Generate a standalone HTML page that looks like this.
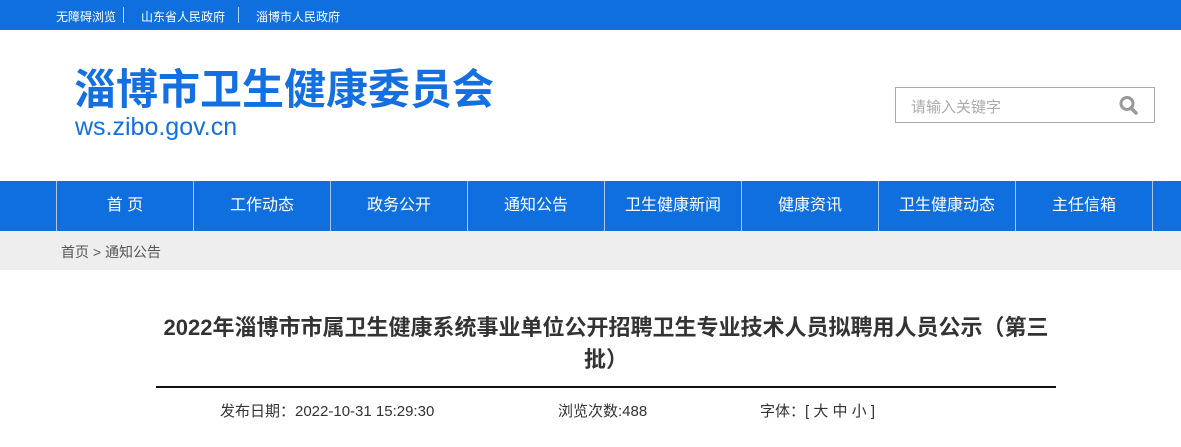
<!DOCTYPE html>
<html><head><meta charset="utf-8"><style>
*{margin:0;padding:0;box-sizing:border-box}
body{width:1181px;height:447px;overflow:hidden;background:#fff;font-family:"Liberation Sans","Noto Sans CJK SC",sans-serif;position:relative}
.top{position:absolute;left:0;top:0;width:1181px;height:30px;background:#0f6fde;color:#fff;font-size:12px}
.top span{position:absolute;top:8px}
.top i{position:absolute;top:7px;width:1px;height:16px;background:#bcd6f5}
.logo{position:absolute;left:74px;top:66px;font-size:42px;font-weight:bold;color:#1470e0;line-height:48px;white-space:nowrap}
.url{position:absolute;left:75px;top:113px;font-size:25px;color:#1470e0}
.search{position:absolute;left:895px;top:87px;width:260px;height:36px;border:1px solid #aaa;}
.search span{position:absolute;left:15px;top:8px;font-size:15px;color:#aaa}
.nav{position:absolute;left:0;top:181px;width:1181px;height:50px;background:#0f6fde}
.nav div{position:absolute;top:0;height:50px;width:137px;border-left:1px solid #a9c8ef;color:#fff;font-size:16px;text-align:center;line-height:50px}
.crumb{position:absolute;left:0;top:231px;width:1181px;height:39px;background:#eee;color:#555;font-size:14px}
.crumb span{position:absolute;left:61px;top:11px}
h1{position:absolute;left:140px;width:932px;top:312px;text-align:center;font-size:22px;line-height:32px;color:#333;font-weight:bold;white-space:nowrap}
.line{position:absolute;left:156px;top:386px;width:900px;height:2px;background:#111}
.meta{position:absolute;top:400px;font-size:15px;color:#333}
</style></head><body>
<div class="top"><span style="left:56px">无障碍浏览</span><i style="left:123px"></i><span style="left:141px">山东省人民政府</span><i style="left:238px"></i><span style="left:256px">淄博市人民政府</span></div>
<div class="logo">淄博市卫生健康委员会</div>
<div class="url">ws.zibo.gov.cn</div>
<div class="search"><span>请输入关键字</span>
<svg style="position:absolute;left:222px;top:7px" width="22" height="20" viewBox="0 0 22 20"><circle cx="9" cy="8.5" r="6" fill="none" stroke="#999" stroke-width="3"/><path d="M13 13l5 5" stroke="#999" stroke-width="3.5" stroke-linecap="round"/></svg></div>
<div class="nav">
<div style="left:56px">首 页</div><div style="left:193px">工作动态</div><div style="left:330px">政务公开</div><div style="left:467px">通知公告</div><div style="left:604px">卫生健康新闻</div><div style="left:741px">健康资讯</div><div style="left:878px">卫生健康动态</div><div style="left:1015px">主任信箱</div><div style="left:1152px;width:30px"></div>
</div>
<div class="crumb"><span>首页 &gt; 通知公告</span></div>
<h1>2022年淄博市市属卫生健康系统事业单位公开招聘卫生专业技术人员拟聘用人员公示（第三<br>批）</h1>
<div class="line"></div>
<div class="meta" style="left:220px">发布日期：2022-10-31 15:29:30</div>
<div class="meta" style="left:558px">浏览次数:488</div>
<div class="meta" style="left:760px">字体：[ 大 中 小 ]</div>
</body></html>
